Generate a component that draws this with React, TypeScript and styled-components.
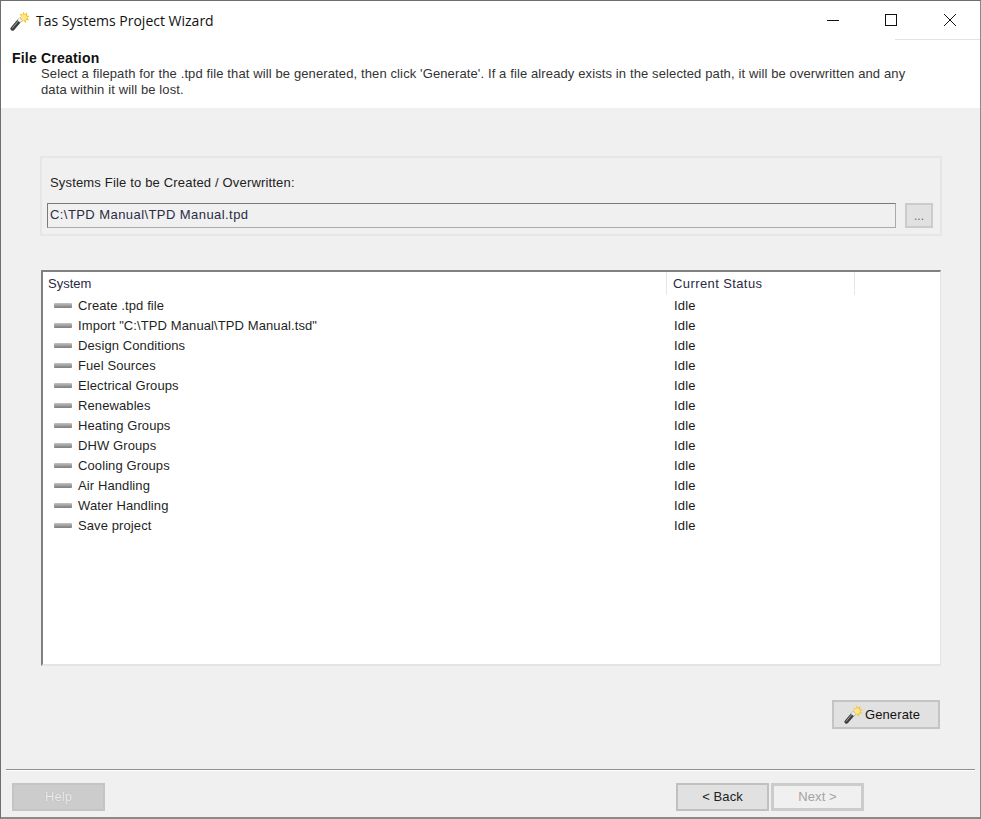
import React from "react";
import styled, { createGlobalStyle } from "styled-components";

const Global = createGlobalStyle`
  html, body { margin: 0; padding: 0; background: #f0f0f0; }
  #root { width: 981px; height: 819px; }
`;

const Window = styled.div`
  box-sizing: border-box;
  width: 981px;
  height: 819px;
  display: flex;
  flex-direction: column;
  background: #f0f0f0;
  border-top: 1px solid #6e6e6e;
  border-left: 1px solid #6e6e6e;
  border-right: 1px solid #8a8a8a;
  border-bottom: 2px solid #8a8a8a;
  font-family: "Liberation Sans", Arial, sans-serif;
  font-size: 13px;
  color: #1a1a1a;
  overflow: hidden;
`;

const Header = styled.header`
  height: 107px;
  flex: none;
  background: #fff;
  display: flex;
  flex-direction: column;
`;

const TitleBar = styled.div`
  height: 39px;
  flex: none;
  display: flex;
  align-items: center;
  padding-left: 9px;
`;

const TitleText = styled.span`
  font-family: "Open Sans", "Noto Sans", sans-serif;
  font-size: 14px;
  margin-left: 6px;
  margin-top: -1px;
  color: #111;
`;

const WinControls = styled.div`
  margin-left: auto;
  display: flex;
  align-self: stretch;
  box-sizing: border-box;
  width: 85px;
  border-bottom: 1px solid #e2e2e2;
  position: relative;
`;

const WinButton = styled.svg<{ $x: number }>`
  position: absolute;
  left: ${(p) => p.$x}px;
  top: 13px;
  width: 12px;
  height: 12px;
`;

const HeadingBlock = styled.div`
  padding: 11px 10px 0 11px;
`;

const Heading = styled.div`
  font-weight: bold;
  font-size: 14px;
  line-height: 15px;
  letter-spacing: 0.2px;
  color: #111;
`;

const Description = styled.div`
  margin-left: 29px;
  width: 870px;
  line-height: 16px;
  color: #333;
  letter-spacing: 0.118px;
`;

const Body = styled.main`
  flex: 1;
  display: flex;
  flex-direction: column;
  padding: 48px 40px 0 39px;
`;

const PathGroup = styled.section`
  box-sizing: border-box;
  height: 80px;
  width: 902px;
  border: 2px solid #e6e6e6;
  padding: 16px 7px 0 5px;
`;

const PathLabel = styled.div`
  margin-left: 3px;
  line-height: 18px;
  letter-spacing: 0.17px;
  color: #222;
`;

const PathRow = styled.div`
  display: flex;
  align-items: center;
  margin-top: 11px;
`;

const PathInput = styled.div`
  box-sizing: border-box;
  width: 849px;
  height: 25px;
  border: 1px solid #7a7a7a;
  border-bottom-color: #aaa;
  border-right-color: #aaa;
  background: #f0f0f0;
  padding-left: 2px;
  line-height: 22px;
  letter-spacing: 0.43px;
  color: #2c2c44;
`;

const Browse = styled.div`
  box-sizing: border-box;
  width: 28px;
  height: 25px;
  margin-left: 9px;
  border: 2px solid #cbcbcb;
  background: #e1e1e1;
  text-align: center;
  line-height: 22px;
  font-size: 12px;
  color: #666;
`;

const List = styled.section`
  box-sizing: border-box;
  margin-top: 34px;
  margin-left: 1px;
  width: 900px;
  height: 396px;
  background: #fff;
  border-top: 2px solid #808080;
  border-left: 2px solid #808080;
  border-right: 1px solid #e4e4e4;
  border-bottom: 2px solid #e4e4e4;
`;

const ListHead = styled.div`
  display: flex;
  height: 23px;
`;

const HeadCell = styled.div<{ $w: number; $pad: number; $track: number }>`
  box-sizing: border-box;
  width: ${(p) => p.$w}px;
  border-right: 1px solid #e6e6e6;
  padding-left: ${(p) => p.$pad}px;
  line-height: 24px;
  letter-spacing: ${(p) => p.$track}px;
  color: #2a2a44;
`;

const Row = styled.div`
  display: flex;
  height: 20px;
  align-items: center;
`;

const NameCell = styled.div`
  width: 625px;
  flex: none;
  display: flex;
  align-items: center;
  padding-left: 11px;
  box-sizing: border-box;
  letter-spacing: 0.1px;
  color: #1f1f1f;
`;

const Bar = styled.span`
  width: 18px;
  height: 5px;
  flex: none;
  margin-right: 6px;
  border-radius: 1px;
  background: linear-gradient(#c4c4c4, #9a9a9a 55%, #7d7d7d);
`;

const StatusCell = styled.div`
  padding-left: 6px;
  letter-spacing: 0.2px;
`;

const GenerateRow = styled.div`
  display: flex;
  justify-content: flex-end;
  margin-top: 34px;
`;

const GenerateButton = styled.div`
  box-sizing: border-box;
  width: 108px;
  height: 29px;
  display: flex;
  align-items: center;
  padding-left: 10px;
  gap: 2px;
  background: #e1e1e1;
  border: 2px solid #c4c4c4;
  letter-spacing: 0.1px;
  color: #111;
`;

const Divider = styled.hr`
  flex: none;
  box-sizing: border-box;
  margin: 0 5px 0 5px;
  height: 2px;
  border: 0;
  border-top: 1px solid #8f8f8f;
  border-bottom: 1px solid #fff;
`;

const Footer = styled.footer`
  flex: none;
  box-sizing: border-box;
  height: 46px;
  display: flex;
  align-items: flex-start;
  padding: 12px 116px 0 11px;
  gap: 2px;
`;

const FooterButton = styled.div<{ $variant: "dim" | "normal" | "ghost" }>`
  box-sizing: border-box;
  width: 93px;
  height: 28px;
  text-align: center;
  letter-spacing: 0.1px;
  line-height: ${(p) => (p.$variant === "ghost" ? 22 : 24)}px;
  border: ${(p) => (p.$variant === "ghost" ? 3 : 2)}px solid ${(p) => (p.$variant === "dim" ? "#c4c4c4" : p.$variant === "normal" ? "#c0c0c0" : "#cccccc")};
  background: ${(p) => (p.$variant === "dim" ? "#cccccc" : p.$variant === "normal" ? "#e1e1e1" : "#f0f0f0")};
  color: ${(p) => (p.$variant === "normal" ? "#222" : p.$variant === "dim" ? "#eee" : "#a3a3a3")};
  ${(p) => (p.$variant === "dim" ? "text-shadow: 0 0 1px #a0a0a0; margin-right: auto;" : "")}
`;

const Wand = ({ size }: { size: number }) => (
  <svg width={size} height={size} viewBox="0 0 20 20" style={{ flex: "none" }}>
    <path
      d="M13.5 0.5 L14.6 3.2 L17.4 1.4 L16.8 4.4 L19.8 5 L17.2 6.8 L19.4 9.2 L16.2 9 L15.6 12 L13.4 9.8 L11.2 11.2 L11.2 8.4 L8.6 7.4 L11 5.6 L9.8 2.8 L12.6 3.6 Z"
      fill="#f4c22c"
    />
    <circle cx="13.8" cy="6.4" r="3" fill="#fde68c" />
    <path d="M2.6 17.6 L9.6 9.4" stroke="#3e3e3e" strokeWidth="4.2" strokeLinecap="round" />
    <path d="M2.4 17 L8.4 9.8" stroke="#a4a4a4" strokeWidth="1" strokeLinecap="round" />
    <path d="M8.8 10.4 L10.9 7.9" stroke="#ededed" strokeWidth="4" />
  </svg>
);

const rows = [
  "Create .tpd file",
  'Import "C:\\TPD Manual\\TPD Manual.tsd"',
  "Design Conditions",
  "Fuel Sources",
  "Electrical Groups",
  "Renewables",
  "Heating Groups",
  "DHW Groups",
  "Cooling Groups",
  "Air Handling",
  "Water Handling",
  "Save project",
];

export default function App() {
  return (
    <Window>
      <Global />
      <Header>
        <TitleBar>
          <Wand size={20} />
          <TitleText>Tas Systems Project Wizard</TitleText>
          <WinControls>
            <WinButton $x={-68} viewBox="0 0 12 12">
              <path d="M0 6.5H12" stroke="#111" strokeWidth="1" />
            </WinButton>
            <WinButton $x={-10} viewBox="0 0 12 12">
              <rect x="0.5" y="0.5" width="11" height="11" fill="none" stroke="#111" />
            </WinButton>
            <WinButton $x={49} viewBox="0 0 12 12">
              <path d="M0 0L12 12M12 0L0 12" stroke="#111" strokeWidth="1" />
            </WinButton>
          </WinControls>
        </TitleBar>
        <HeadingBlock>
          <Heading>File Creation</Heading>
          <Description>
            Select a filepath for the .tpd file that will be generated, then click 'Generate'. If a file already exists in the selected path, it will be overwritten and any data within it will be lost.
          </Description>
        </HeadingBlock>
      </Header>
      <Body>
        <PathGroup>
          <PathLabel>Systems File to be Created / Overwritten:</PathLabel>
          <PathRow>
            <PathInput>C:\TPD Manual\TPD Manual.tpd</PathInput>
            <Browse>...</Browse>
          </PathRow>
        </PathGroup>
        <List>
          <ListHead>
            <HeadCell $w={624} $pad={5} $track={0}>System</HeadCell>
            <HeadCell $w={188} $pad={6} $track={0.4}>Current Status</HeadCell>
          </ListHead>
          {rows.map((r) => (
            <Row key={r}>
              <NameCell>
                <Bar />
                {r}
              </NameCell>
              <StatusCell>Idle</StatusCell>
            </Row>
          ))}
        </List>
        <GenerateRow>
          <GenerateButton>
            <Wand size={19} />
            Generate
          </GenerateButton>
        </GenerateRow>
      </Body>
      <Divider />
      <Footer>
        <FooterButton $variant="dim">Help</FooterButton>
        <FooterButton $variant="normal">&lt; Back</FooterButton>
        <FooterButton $variant="ghost">Next &gt;</FooterButton>
      </Footer>
    </Window>
  );
}
